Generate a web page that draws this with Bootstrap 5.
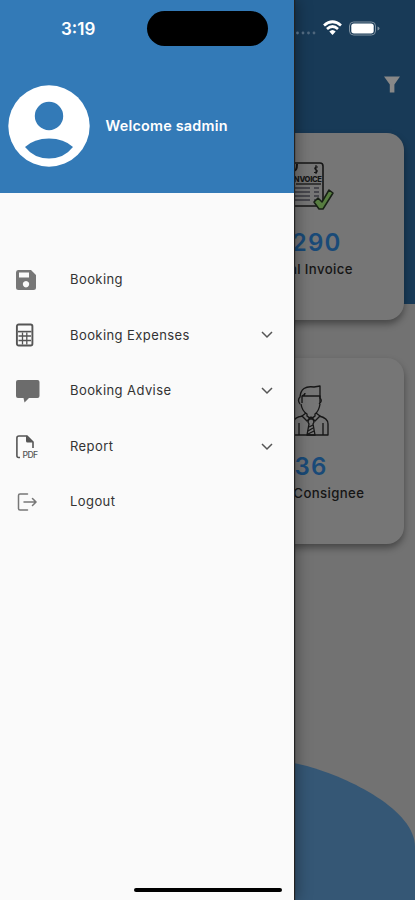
<!DOCTYPE html>
<html lang="en">
<head>
<meta charset="utf-8">
<meta name="viewport" content="width=device-width, initial-scale=1">
<title>Booking dashboard</title>
<link href="https://cdn.jsdelivr.net/npm/bootstrap@5.3.0/dist/css/bootstrap.min.css" rel="stylesheet">
<style>
body{font-family:Inter,"Liberation Sans",sans-serif;background:#727272}
.phone{width:415px;height:900px;background:#727272}
/* dimmed dashboard behind the drawer */
.dash-top{height:304px;background:#183a57}
.toolbar-row{height:133px;padding:75px 14px 0 0}
.stat{width:187px;height:187px;margin-right:11px;border-radius:17px;background:#767676;box-shadow:0 4px 7px rgba(0,0,0,.38);padding-top:27px}
.stat + .stat{margin-top:38px;height:186px}
.stat svg{width:50px;height:52px}
.stat-num{font-size:24px;font-weight:600;line-height:30px;letter-spacing:1.2px;color:#194a78;margin:16px 0 0 1px}
.stat + .stat .stat-num{margin-top:15px}
.stat-label{font-size:13.2px;font-weight:500;line-height:20px;letter-spacing:.38px;color:#151515;margin-top:1px;white-space:nowrap}
.wave{height:139px;display:block}
/* drawer */
.drawer{width:294px;background:#fafafa;box-shadow:1px 0 1px #222,3px 0 14px rgba(0,0,0,.35)}
.drawer-head{height:193px;background:#337ab7;padding:59px 0 0 8px}
.hello{font-size:14.4px;font-weight:600;letter-spacing:.22px;margin-left:15.5px}
.menu{padding-top:59px}
.menu-row{height:55.6px;padding:0 20px 0 15px;color:#333;font-size:13px;letter-spacing:.42px}
.icon-cell{width:55px;display:flex}
.clock{font-size:17px;font-weight:600;line-height:20px;left:61px;top:19px;letter-spacing:0}
.island{width:121px;height:35px;left:147px;top:11px;background:#000}
.signals{left:295px;top:19px}
.home-bar{width:148px;height:4px;left:134px;bottom:8px;background:#000}
</style>
</head>
<body>
<div class="phone position-relative overflow-hidden">
  <main class="h-100 position-relative">
    <div class="dash-top position-absolute top-0 start-0 w-100"></div>
    <div class="position-relative h-100 d-flex flex-column">
      <div class="toolbar-row d-flex justify-content-end align-items-start">
        <svg width="18" height="19" viewBox="0 0 18 19"><path d="M1 1.5h16L11.4 9.4V17.5H6.8V9.4Z" fill="#888"/></svg>
      </div>
      <section class="stat align-self-end text-center">
        <svg viewBox="0 0 50 52">
          <g fill="none" stroke="#161616" stroke-width="1.6">
            <path d="M5 3h29q3 0 3 3v37q0 3-3 3H6"/>
            <path d="M10 24h25" stroke-width="1.3"/>
            <path d="M7 10q4 2 4-6" stroke-width="2"/>
            <path d="M32 7h-2.5q-1.5 1.8 0 2.5 3 1 1 3H28M30 5v9" stroke-width="1.1"/>
            <path d="M8 28h16M8 32h16M8 36h16M8 40h16M28 28h5M28 32h5M28 36h5M28 40h3" stroke="#383840" stroke-width="1.7"/>
          </g>
          <text x="21" y="21.5" text-anchor="middle" font-size="7.6" font-weight="800" fill="#151515" font-family="Inter,sans-serif" textLength="30">INVOICE</text>
          <path d="M28 42l4-4 4 4 7-12 4 3-10 16h-4Z" fill="#577d40" stroke="#172015" stroke-width="1.5" stroke-linejoin="round"/>
        </svg>
        <div class="stat-num">1290</div>
        <div class="stat-label">Total Invoice</div>
      </section>
      <section class="stat align-self-end text-center">
        <svg viewBox="0 0 50 52" fill="none" stroke="#171717" stroke-width="1.35" stroke-linejoin="round">
          <path d="M14 19q-3-4 0-7Q15 0 28 2l6-1 0 12q3 3-1 6M15 19q1 7 6 10v2q4 4 8 0v-2q4-3 5-10"/>
          <path d="M16 18v-7h18v7M16 11q3-1 3-3"/>
          <path d="M20 28l-4 3 5 5 4-4 4 4 5-5-4-3"/>
          <path d="M17 31Q7 32 7 39v11h35V39q0-6-9-8M13 38v12M37 38v12"/>
          <path d="M23 34h4l1 3-1 2 2 11h-8l2-11-1-2Z"/><path d="M23 42l4-2M22 46l5-3M22 49l6-3"/>
        </svg>
        <div class="stat-num">36</div>
        <div class="stat-label">Total Consignee</div>
      </section>
      <svg class="wave mt-auto w-100" viewBox="0 0 415 139" preserveAspectRatio="none"><path d="M0 0H280Q292 1 307 5C350 17 415 49 415 86V139H0Z" fill="#355775"/></svg>
    </div>
  </main>

  <aside class="drawer position-absolute top-0 start-0 h-100">
    <header class="drawer-head d-flex align-items-center text-white">
      <svg class="flex-shrink-0" width="82" height="82" viewBox="0 0 82 82"><circle cx="41" cy="41" r="40.7" fill="#fff"/><circle cx="41" cy="31" r="14.2" fill="#337ab7"/><path d="M17 62Q26 53.5 41 53.5T65 62Q56 73.5 41 73.5T17 62Z" fill="#337ab7"/></svg>
      <span class="hello">Welcome sadmin</span>
    </header>
    <nav class="menu d-flex flex-column">
      <div class="menu-row d-flex align-items-center">
        <span class="icon-cell"><svg width="24" height="24" viewBox="0 0 24 24"><path fill="#777" fill-rule="evenodd" d="M3 2H16L21 7V19.5Q21 22 18.500 22H3.500Q1 22 1 19.500V4.500Q1 2 3 2ZM4 4.500V9.500H14V4.500ZM11 13a3.200 3.200 0 1 0 .01 0Z"/></svg></span>
        <span class="flex-grow-1">Booking</span>
      </div>
      <div class="menu-row d-flex align-items-center">
        <span class="icon-cell"><svg width="24" height="24" viewBox="0 0 24 24" fill="none" stroke="#555" stroke-width="1.9"><rect x="1.900" y="1.500" width="15.500" height="21" rx="1.800"/><path d="M3 8.600h13.500" stroke-width="1.600"/><path d="M3.500 13h12.500M3.500 17.500h12.500M7.500 9.500v12M11.800 9.500v12" stroke-width="1.300"/></svg></span>
        <span class="flex-grow-1">Booking Expenses</span>
        <svg width="14" height="10" viewBox="0 0 14 10"><path d="M2 2l5 5 5-5" fill="none" stroke="#555" stroke-width="1.500"/></svg>
      </div>
      <div class="menu-row d-flex align-items-center">
        <span class="icon-cell"><svg width="26" height="24" viewBox="0 0 26 24"><path fill="#6c6c6c" d="M3 1H22.500Q24.500 1 24.500 3V17Q24.500 19 22.500 19H14L9.500 23.500 8.500 19H3Q1 19 1 17V3Q1 1 3 1Z"/></svg></span>
        <span class="flex-grow-1">Booking Advise</span>
        <svg width="14" height="10" viewBox="0 0 14 10"><path d="M2 2l5 5 5-5" fill="none" stroke="#555" stroke-width="1.500"/></svg>
      </div>
      <div class="menu-row d-flex align-items-center">
        <span class="icon-cell"><svg width="26" height="26" viewBox="0 0 26 26"><path d="M5 23.500H3.500Q1.900 23.500 1.900 21.500V4Q1.900 2 4 2H12L18 8V14" fill="none" stroke="#555" stroke-width="1.600"/><path d="M11 1.500v5.500q0 1.500 1.500 1.500H18Z" fill="#555"/><text x="7.500" y="24.300" font-size="8.600" font-weight="500" textLength="16" fill="#555" font-family="Inter,sans-serif">PDF</text></svg></span>
        <span class="flex-grow-1">Report</span>
        <svg width="14" height="10" viewBox="0 0 14 10"><path d="M2 2l5 5 5-5" fill="none" stroke="#555" stroke-width="1.500"/></svg>
      </div>
      <div class="menu-row d-flex align-items-center">
        <span class="icon-cell"><svg width="24" height="24" viewBox="0 0 24 24" fill="none" stroke="#777" stroke-width="1.500" stroke-linecap="round"><path d="M12.500 4H5Q3.500 4 3.500 5.500V18.500Q3.500 20 5 20H12.500M9 12H21M17.500 8.500L21 12L17.500 15.500"/></svg></span>
        <span class="flex-grow-1">Logout</span>
      </div>
    </nav>
  </aside>

  <!-- status bar and home indicator lie over the app -->
  <div class="clock position-absolute text-white">3:19</div>
  <div class="island position-absolute rounded-pill"></div>
  <svg class="signals position-absolute" width="88" height="20" viewBox="0 0 88 20">
    <g fill="#4f677d"><circle cx="2.500" cy="14" r="1.400"/><circle cx="8" cy="14" r="1.400"/><circle cx="13.500" cy="14" r="1.400"/><circle cx="19" cy="14" r="1.400"/></g>
    <path d="M29 6.500Q37.500-1 46 6.500M32 10Q37.500 5 43 10" fill="none" stroke="#fff" stroke-width="2.700"/><path d="M34.300 12.500Q37.500 9.500 40.700 12.500L37.500 16Z" fill="#fff"/>
    <rect x="54.500" y="3" width="26" height="13" rx="4" fill="none" stroke="#7e91a1"/><rect x="56.300" y="4.600" width="22.400" height="9.800" rx="2.600" fill="#fff"/><path d="M82.500 7.500Q84.500 8 84.500 9.500T82.500 11.500Z" fill="#7e91a1"/>
  </svg>
  <div class="home-bar position-absolute rounded-pill"></div>
</div>
<script src="https://cdn.jsdelivr.net/npm/bootstrap@5.3.0/dist/js/bootstrap.bundle.min.js"></script>
</body>
</html>
